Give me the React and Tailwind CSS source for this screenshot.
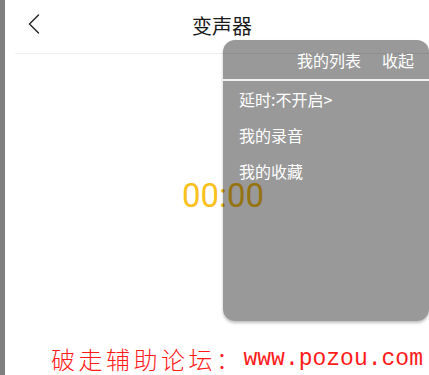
import { useState } from "react"

const cjk = { fontFamily: '"Noto Sans CJK SC", "Noto Sans", sans-serif' }

function BackIcon() {
    return (
        <svg width="12" height="20" viewBox="0 0 12 20" fill="none">
            <polyline points="10.5,1 1.5,10 10.5,19" stroke="#222" strokeWidth="1.4" strokeLinecap="round" strokeLinejoin="round" />
        </svg>
    )
}

export default function App() {
    const [delay] = useState("不开启")
    const menu = [`延时:${delay}>`, "我的录音", "我的收藏"]

    return (
        <div className="flex w-[429px] h-[375px] overflow-hidden" style={cjk}>
            {/* left strip */}
            <div className="w-[5px] shrink-0 bg-[#7f7f7f]" />

            <div className="relative flex flex-1 flex-col bg-white">
                {/* header */}
                <div className="flex h-[53px] items-start">
                    <div className="ml-[23px] mt-[14px]">
                        <BackIcon />
                    </div>
                    <p className="ml-[152px] mt-[16px] text-[20px] leading-none text-[#1a1a1a]">变声器</p>
                </div>
                <div className="ml-[10px] h-px bg-[#efefef]" />

                {/* timer */}
                <div className="mt-[125px] flex justify-center pl-[12px]">
                    <span className="text-[33px] leading-none text-[#f8c11c]" style={{ fontFamily: "Roboto, sans-serif" }}>
                        00:00
                    </span>
                </div>

                {/* watermark */}
                <div className="mt-auto mb-[4px] flex items-end pl-[46px] leading-none text-[#ff1a1a]">
                    <span className="text-[24px] font-light tracking-[3.5px]">破走辅助论坛：</span>
                    <span className="ml-[0px] text-[23px]" style={{ fontFamily: '"Liberation Mono", monospace' }}>
                        www.pozou.com
                    </span>
                </div>

                {/* popup list */}
                <div className="absolute left-[218px] top-[40px] flex h-[281px] w-[206px] flex-col rounded-[12px] bg-black/40 shadow-[0_2px_3px_rgba(0,0,0,0.25)]">
                    <div className="flex h-[39px] items-center justify-end gap-[21px] pr-[15px] text-[16px] leading-none text-white">
                        <span>我的列表</span>
                        <span>收起</span>
                    </div>
                    <div className="h-[2px] bg-[#f2f2f2]" />
                    {menu.map((item) => (
                        <div key={item} className="flex h-[36px] items-center pl-[16px] text-[16px] leading-none text-white">
                            {item}
                        </div>
                    ))}
                </div>
            </div>
        </div>
    )
}
